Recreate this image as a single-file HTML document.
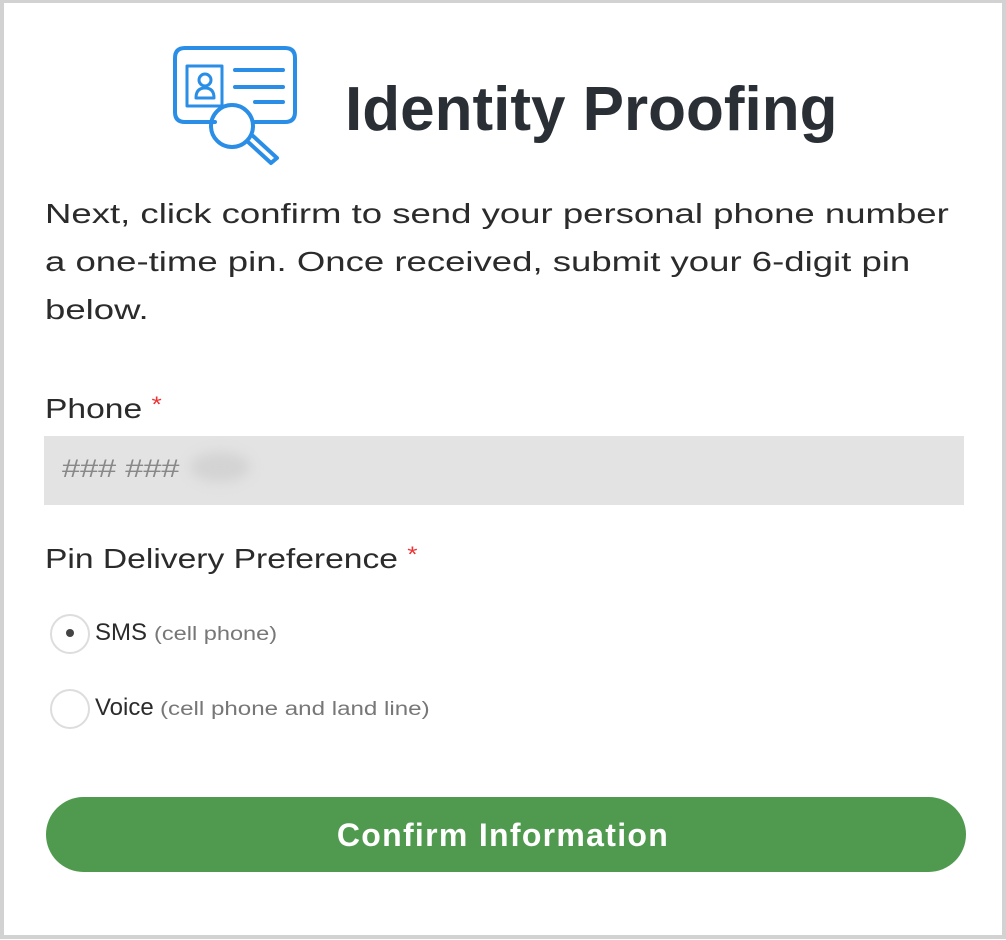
<!DOCTYPE html>
<html><head><style>
html,body{margin:0;padding:0;background:#fff;}
body{width:1006px;height:940px;position:relative;overflow:hidden;font-family:"Liberation Sans",sans-serif;color:#2b2b2b;}
.frame{position:absolute;left:0;top:0;width:998px;height:932px;border:4px solid #d2d2d2;border-top-width:3px;}
.t{position:absolute;white-space:nowrap;transform-origin:0 50%;}
.p{left:45px;font-size:28px;transform:scaleX(1.305);}
.lab{left:45px;font-size:28px;transform:scaleX(1.2);}
.req{color:#e33;font-size:22px;vertical-align:6px;}
.input{position:absolute;left:44px;top:436px;width:920px;height:69px;background:#e3e3e3;}
.radio{position:absolute;width:36px;height:36px;border:2px solid #ddd;border-radius:50%;background:#fff;}
.btn{position:absolute;left:46px;top:797px;width:920px;height:75px;border-radius:38px;background:#4f9a4e;}
.btxt{position:absolute;left:0;width:1006px;top:817px;text-align:center;color:#fff;font-weight:bold;font-size:32px;letter-spacing:1.3px;}
.sub{color:#777;font-size:19px;}
</style></head><body>
<div class="frame"></div>
<svg style="position:absolute;left:165px;top:42px" width="140" height="135" viewBox="0 0 140 135" fill="none" stroke="#2a8ee6" stroke-width="4" stroke-linecap="round" stroke-linejoin="round">
<path d="M50 80 H20 Q10 80 10 70 V16 Q10 6 20 6 H120 Q130 6 130 16 V70 Q130 80 120 80 H90"/>
<rect x="22" y="24" width="35" height="40" stroke-width="3"/>
<circle cx="40" cy="38" r="6" stroke-width="3"/>
<path d="M31 56 Q31 46 40 46 Q49 46 49 56 Z" stroke-width="3"/>
<path d="M70 28 H118 M70 45 H118 M90 60 H118"/>
<circle cx="67" cy="84" r="21"/>
<path d="M82 99 L106 121 L112 116 L88 94"/>
</svg>
<div class="t" style="left:345px;top:74px;font-size:62px;font-weight:bold;color:#2a2f36;transform:scaleX(1.0);">Identity Proofing</div>
<div class="t p" style="top:198px;">Next, click confirm to send your personal phone number</div>
<div class="t p" style="top:246px;">a one-time pin. Once received, submit your 6-digit pin</div>
<div class="t p" style="top:294px;">below.</div>
<div class="t lab" style="top:392px;">Phone <span class="req">*</span></div>
<div class="input"></div>
<div class="t" style="left:62px;top:455px;font-size:25px;color:#888;transform:scaleX(1.3);">### ###</div>
<div style="position:absolute;left:190px;top:452px;width:60px;height:30px;border-radius:50%;background:#d3d3d3;filter:blur(6px);"></div>
<div class="t lab" style="top:542px;">Pin Delivery Preference <span class="req">*</span></div>
<div class="radio" style="left:50px;top:614px;"></div>
<div style="position:absolute;left:66px;top:629px;width:8px;height:8px;border-radius:50%;background:#444;"></div>
<div class="t" style="left:95px;top:619px;font-size:24px;">SMS <span class="sub" style="display:inline-block;transform:scaleX(1.24);transform-origin:0 50%;">(cell phone)</span></div>
<div class="radio" style="left:50px;top:689px;"></div>
<div class="t" style="left:95px;top:694px;font-size:24px;">Voice <span class="sub" style="display:inline-block;transform:scaleX(1.27);transform-origin:0 50%;">(cell phone and land line)</span></div>
<div class="btn"></div>
<div class="btxt">Confirm Information</div>
</body></html>
